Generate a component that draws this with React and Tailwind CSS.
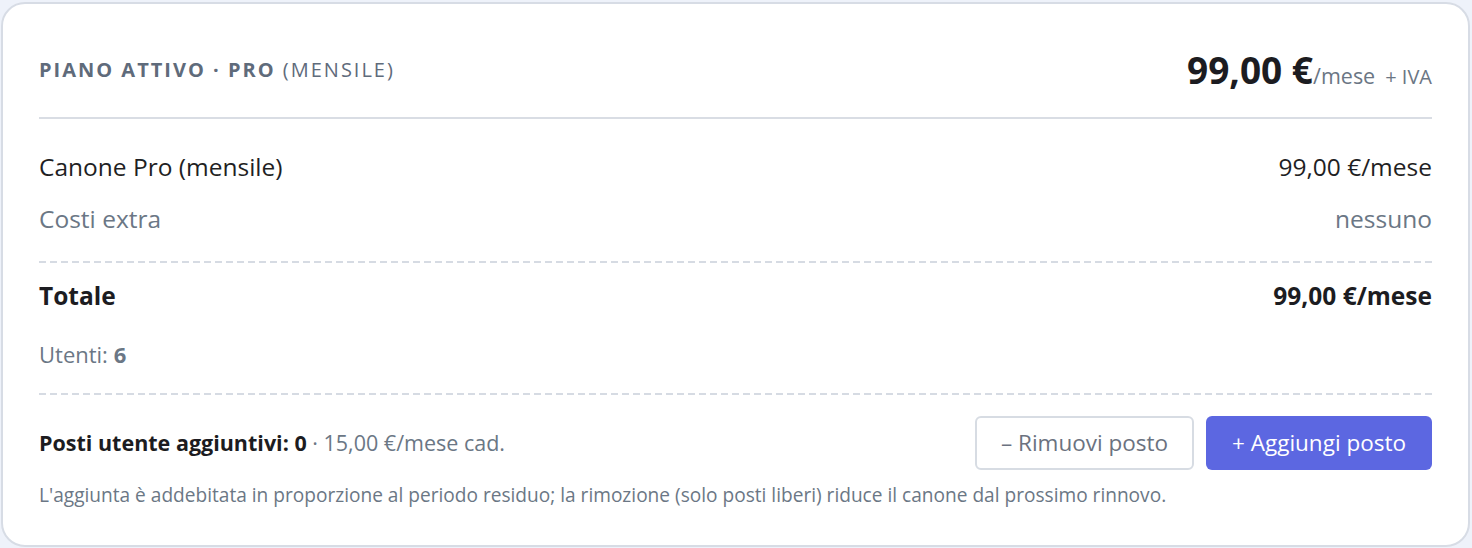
import React from "react";

const dashed =
  "h-[2px] w-full bg-[repeating-linear-gradient(90deg,#d6dbe3_0_7px,transparent_7px_11px)]";

function Row({ left, right, className }) {
  return (
    <div className={"flex items-center justify-between " + className}>
      <span>{left}</span>
      <span>{right}</span>
    </div>
  );
}

export default function App() {
  return (
    <div className="h-[548px] w-[1472px] bg-[#eef2fa] pt-[2px] pl-[1px] pr-[2px] pb-[1px] font-['Open_Sans',sans-serif]">
      <div className="h-full rounded-[24px] border-2 border-[#d7dce5] bg-white px-[36px]">
        {/* header */}
        <div className="flex h-[52px] items-center justify-between mt-[40px] mb-[21px]">
          <div className="text-[20px] tracking-[0.1em] text-[#5f6b7b]">
            <span className="font-bold">PIANO ATTIVO · PRO</span> (MENSILE)
          </div>
          <div className="flex items-baseline text-[#6b7684]">
            <span className="text-[37px] font-bold text-[#1c1c21]">99,00 €</span>
            <span className="text-[21.5px]">/mese</span>
            <span className="ml-[10px] text-[20px]">+ IVA</span>
          </div>
        </div>
        <div className="h-[2px] w-full bg-[#d9dde4]" />

        <Row
          className="mt-[28px] h-[40px] text-[24.5px] text-[#1f1f24]"
          left="Canone Pro (mensile)"
          right="99,00 €/mese"
        />
        <Row
          className="mt-[12px] h-[40px] text-[24.5px] text-[#6b7785]"
          left="Costi extra"
          right="nessuno"
        />
        <div className={dashed + " mt-[22px]"} />
        <Row
          className="mt-[13px] h-[40px] text-[24.5px] font-bold text-[#1c1c21]"
          left="Totale"
          right="99,00 €/mese"
        />
        <div className="mt-[23px] flex h-[30px] items-center text-[22px] text-[#6b7785]">
          <span>
            Utenti: <span className="font-bold">6</span>
          </span>
        </div>
        <div className={dashed + " mt-[24px]"} />

        {/* posti aggiuntivi */}
        <div className="mt-[21px] flex items-center justify-between">
          <div className="text-[21.5px] text-[#6b7785]">
            <span className="font-bold text-[#1c1c21]">Posti utente aggiuntivi: 0</span> · 15,00 €/mese cad.
          </div>
          <div className="flex gap-[12px]">
            <button className="h-[54px] w-[219px] rounded-[6px] border-2 border-[#d7dce3] bg-white text-[22.5px] text-[#6b7280]">
              – Rimuovi posto
            </button>
            <button className="h-[54px] w-[226px] rounded-[6px] bg-[#5c67e1] text-[22.5px] text-white">
              + Aggiungi posto
            </button>
          </div>
        </div>
        <p className="mt-[11px] text-[19.1px] text-[#6b7785]">
          L'aggiunta è addebitata in proporzione al periodo residuo; la rimozione (solo posti liberi) riduce il canone dal prossimo rinnovo.
        </p>
      </div>
    </div>
  );
}
